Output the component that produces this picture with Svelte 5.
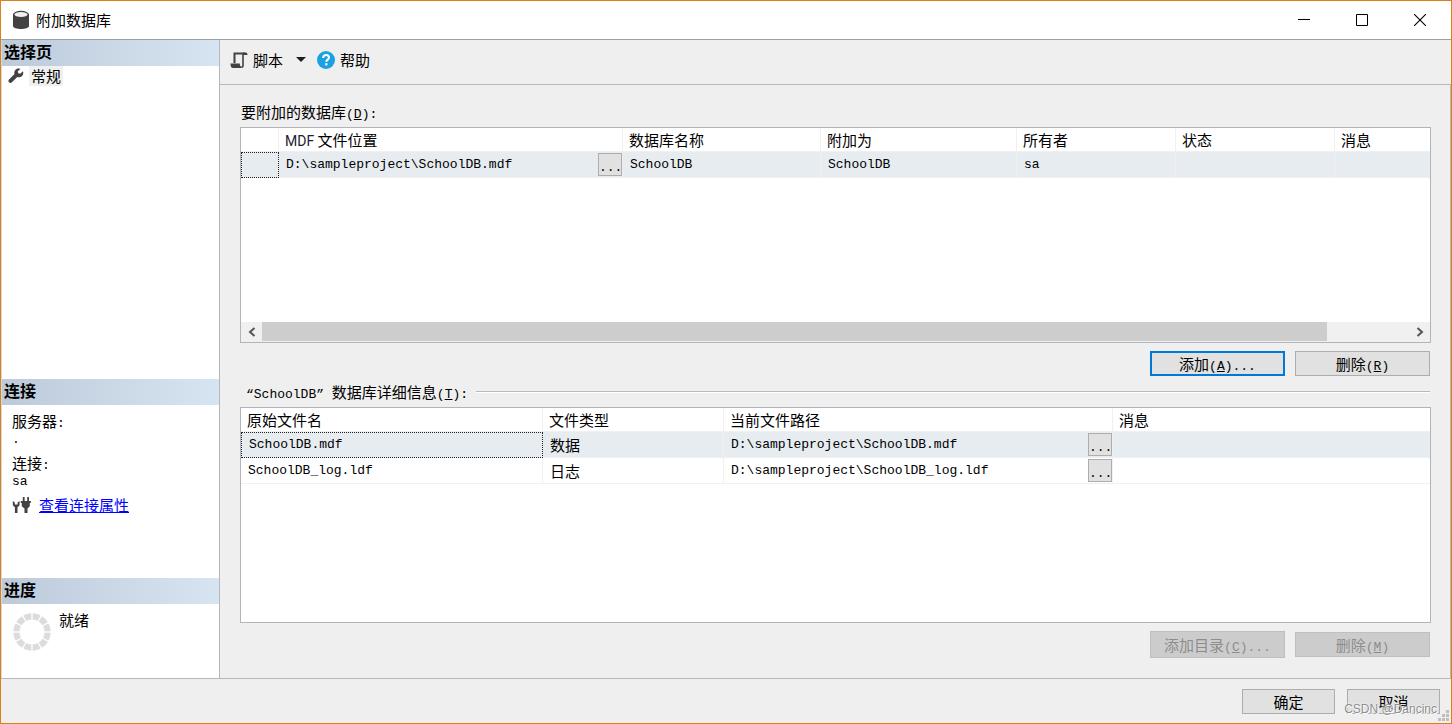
<script lang="ts">
    type Database = { mdf: string; name: string; attachAs: string; owner: string; status: string; message: string };
    type DetailFile = { name: string; type: string; path: string; message: string };

    let databases: Database[] = $state([
        { mdf: 'D:\\sampleproject\\SchoolDB.mdf', name: 'SchoolDB', attachAs: 'SchoolDB', owner: 'sa', status: '', message: '' }
    ]);

    let files: DetailFile[] = $state([
        { name: 'SchoolDB.mdf', type: '数据', path: 'D:\\sampleproject\\SchoolDB.mdf', message: '' },
        { name: 'SchoolDB_log.ldf', type: '日志', path: 'D:\\sampleproject\\SchoolDB_log.ldf', message: '' }
    ]);

    let selectedFile = $state(0);

    // Spinner segments, one every 30 degrees
    const segments = Array.from({ length: 12 }, (_, i) => i * 30);
</script>

{#snippet browse(label: string)}
    <button class="browse" aria-label={label}><span class="lat">...</span></button>
{/snippet}

<div class="window">
    <header class="titlebar">
        <svg class="db-icon" width="18" height="20" viewBox="0 0 18 20" aria-hidden="true">
            <path d="M1 4v12c0 4 16 4 16 0V4z" fill="#424242" />
            <ellipse cx="9" cy="4.5" rx="8" ry="3.7" fill="#424242" />
            <ellipse cx="9" cy="4.6" rx="6.5" ry="2.5" fill="#f0eff1" />
        </svg>
        <h1>附加数据库</h1>
        <button class="caption" aria-label="最小化">
            <svg width="12" height="12"><path d="M0 5.5h12" stroke="#000" /></svg>
        </button>
        <button class="caption" aria-label="最大化">
            <svg width="12" height="12"><path d="M.5.5h11v11H.5z" stroke="#000" fill="none" /></svg>
        </button>
        <button class="caption" aria-label="关闭">
            <svg width="12" height="12"><path d="M0 0l12 12M12 0L0 12" stroke="#000" stroke-width="1.1" /></svg>
        </button>
    </header>

    <div class="body">
        <aside>
            <section class="pages">
                <h2>选择页</h2>
                <a class="page" href="#general">
                    <svg width="16" height="16" viewBox="0 0 16 16" aria-hidden="true">
                        <path d="M15 3.2l-2.8 2.5-2-.4-.4-2L12.400 1C10.500.2 8.300.6 7.100 2.200 6.200 3.400 6.100 4.800 6.500 6.100L1 11.400c-.8.9-.8 2.100 0 2.900.8.8 2 .8 2.900 0L9.300 9c1.700.6 3.600.2 4.800-1.100 1.200-1.300 1.500-3.200.9-4.700z" fill="#424242" />
                    </svg>
                    <span>常规</span>
                </a>
            </section>

            <section class="connection">
                <h2>连接</h2>
                <dl>
                    <dt>服务器<span class="lat">:</span></dt>
                    <dd><span class="lat">.</span></dd>
                    <dt>连接<span class="lat">:</span></dt>
                    <dd><span class="lat">sa</span></dd>
                </dl>
                <div class="props">
                    <svg width="19" height="18" viewBox="0 0 19 18" aria-hidden="true">
                        <path d="M.8 5v3.200c0 1.500.8 2.300 2.100 2.800V17h2.600v-6c1.300-.5 2.100-1.300 2.100-2.800V5L5.600 6.500v2H2.800v-2z" fill="#424242" />
                        <path d="M10.800 1h1.800v4h-1.800zM15.200 1H17v4h-1.800zM8.800 5h10v2h-1v3.200L15.500 12.500V17h-3v-4.500L9.800 10.200V7h-1z" fill="#424242" />
                    </svg>
                    <a href="#connection">查看连接属性</a>
                </div>
            </section>

            <section class="progress">
                <h2>进度</h2>
                <div class="state">
                    <svg width="40" height="40" viewBox="-20 -20 40 40" aria-hidden="true">
                        {#each segments as angle}
                            <path d="M-4.200-18.200A18.700 18.700 0 0 1 4.200-18.200L2.700-12.200A12.500 12.500 0 0 0-2.700-12.200z" fill="#dcdcdc" transform="rotate({angle + 15})" />
                        {/each}
                    </svg>
                    <span>就绪</span>
                </div>
            </section>
        </aside>

        <main>
            <div class="toolbar">
                <button class="tool script">
                    <svg width="18" height="18" viewBox="0 0 18 18" aria-hidden="true">
                        <path d="M4.500 12V2.500H15" fill="none" stroke="#424242" stroke-width="2" />
                        <path d="M13 2v12.500c0 1.300-.8 1.700-1.700 1.700" fill="none" stroke="#424242" stroke-width="1.600" />
                        <path d="M13 1.500h2.500c1.300 0 2 .8 2 2.500H13z" fill="#424242" />
                        <path d="M.5 12.500h9.300c0 1.700.4 2.700 1.700 3.500v1H3C1.300 17 .5 15.500.5 12.500z" fill="#424242" />
                    </svg>
                    <span>脚本</span>
                    <svg class="arrow" width="10" height="6" aria-hidden="true"><path d="M0 0h10L5 5z" fill="#1e1e1e" /></svg>
                </button>
                <button class="tool">
                    <svg width="18" height="18" viewBox="0 0 18 18" aria-hidden="true">
                        <circle cx="9" cy="9" r="9" fill="#1ba1e2" />
                        <path d="M6.200 7c0-1.900 1.200-2.900 2.900-2.900s2.900 1 2.900 2.500c0 2-2.700 2.100-2.700 4.200" fill="none" stroke="#fff" stroke-width="2" />
                        <path d="M8.200 12.200h2.200v2.200H8.200z" fill="#fff" />
                    </svg>
                    <span>帮助</span>
                </button>
            </div>

            <div class="content">
                <h3 id="db-label">要附加的数据库<span class="lat">(<u>D</u>):</span></h3>
                <div class="grid">
                    <table class="databases" aria-labelledby="db-label">
                        <colgroup>
                            <col class="c-select" /><col class="c-mdf" /><col class="c-name" /><col class="c-as" />
                            <col class="c-owner" /><col class="c-owner" /><col />
                        </colgroup>
                        <thead>
                            <tr>
                                <th></th>
                                <th><span class="mdf">MDF</span> 文件位置</th>
                                <th>数据库名称</th>
                                <th>附加为</th>
                                <th>所有者</th>
                                <th>状态</th>
                                <th>消息</th>
                            </tr>
                        </thead>
                        <tbody>
                            {#each databases as db}
                                <tr class="selected">
                                    <td class="focus"></td>
                                    <td>
                                        <div class="path"><span class="lat">{db.mdf}</span>{@render browse('浏览 MDF 文件')}</div>
                                    </td>
                                    <td class="lat">{db.name}</td>
                                    <td class="lat">{db.attachAs}</td>
                                    <td class="lat">{db.owner}</td>
                                    <td>{db.status}</td>
                                    <td>{db.message}</td>
                                </tr>
                            {/each}
                        </tbody>
                    </table>
                    <div class="scrollbar">
                        <button aria-label="向左滚动">
                            <svg width="8" height="10"><path d="M6.500 1L2 5l4.500 4" fill="none" stroke="#555" stroke-width="2" /></svg>
                        </button>
                        <div class="track"><div class="thumb"></div><div class="rest"></div></div>
                        <button aria-label="向右滚动">
                            <svg width="8" height="10"><path d="M1.500 1L6 5 1.500 9" fill="none" stroke="#555" stroke-width="2" /></svg>
                        </button>
                    </div>
                </div>
                <div class="actions">
                    <button class="btn default">添加<span class="lat">(<u>A</u>)...</span></button>
                    <button class="btn">删除<span class="lat">(<u>R</u>)</span></button>
                </div>

                <h3 class="rule" id="detail-label">
                    <span><span class="lat">{'“SchoolDB” '}</span>数据库详细信息<span class="lat">(<u>T</u>):</span></span>
                </h3>
                <div class="grid">
                    <table class="details" aria-labelledby="detail-label">
                        <colgroup>
                            <col class="c-file" /><col class="c-type" /><col class="c-path" /><col />
                        </colgroup>
                        <thead>
                            <tr>
                                <th>原始文件名</th>
                                <th>文件类型</th>
                                <th>当前文件路径</th>
                                <th>消息</th>
                            </tr>
                        </thead>
                        <tbody>
                            {#each files as file, i}
                                <tr class:selected={i === selectedFile} onclick={() => (selectedFile = i)}>
                                    <td class="lat" class:focus={i === selectedFile}>{file.name}</td>
                                    <td>{file.type}</td>
                                    <td>
                                        <div class="path"><span class="lat">{file.path}</span>{@render browse('浏览文件路径')}</div>
                                    </td>
                                    <td>{file.message}</td>
                                </tr>
                            {/each}
                        </tbody>
                    </table>
                </div>
                <div class="actions">
                    <button class="btn tall" disabled>添加目录<span class="lat">(<u>C</u>)...</span></button>
                    <button class="btn" disabled>删除<span class="lat">(<u>M</u>)</span></button>
                </div>
            </div>
        </main>
    </div>

    <footer>
        <button class="btn small">确定</button>
        <button class="btn small">取消</button>
        <svg class="grip" width="12" height="12" aria-hidden="true">
            <path d="M8 0h3v3H8zM4 4h3v3H4zM8 4h3v3H8zM0 8h3v3H0zM4 8h3v3H4zM8 8h3v3H8z" fill="#bfbfbf" />
        </svg>
        <span class="watermark">CSDN @Dancinc</span>
    </footer>
</div>

<style>
    :global(body) {
        margin: 0;
    }

    .window {
        box-sizing: border-box;
        display: flex;
        flex-direction: column;
        min-height: 100vh;
        border: 1px solid #d9821b;
        background: #efefef;
        color: #000;
        font-family: "Noto Sans CJK SC", sans-serif;
        font-size: 15px;
        line-height: 20px;
    }

    button {
        padding: 0;
        border: 0;
        background: none;
        color: inherit;
        font: inherit;
    }

    h1, h2, h3 {
        margin: 0;
        font-size: 15px;
        font-weight: 400;
    }

    .lat {
        font-family: "Liberation Mono", "Noto Sans CJK SC", monospace;
        font-size: 13px;
        white-space: pre;
    }

    /* Keeps the smaller Latin runs from growing the line they sit in */
    span.lat {
        line-height: 1;
    }

    /* Title bar */
    .titlebar {
        display: flex;
        align-items: center;
        height: 38px;
        padding: 0 2px 0 11px;
        border-bottom: 1px solid #9a9fa5;
        background: #fff;
    }

    .titlebar h1 {
        flex: 1;
        margin-left: 6px;
    }

    .caption {
        display: flex;
        align-items: center;
        justify-content: center;
        width: 58px;
        height: 38px;
    }

    .body {
        display: flex;
        flex: 1;
    }

    /* Sidebar */
    aside {
        display: flex;
        flex: none;
        flex-direction: column;
        width: 217px;
        border-left: 1px solid #d5d8de;
        border-right: 1px solid #b4b6c0;
        background: #fff;
    }

    h2 {
        height: 26px;
        padding-left: 2px;
        background: linear-gradient(90deg, #bccad9, #d7e5f3);
        font-size: 16px;
        font-weight: 700;
        line-height: 22px;
    }

    .pages {
        flex: 1;
    }

    .connection {
        min-height: 199px;
    }

    .progress {
        min-height: 100px;
    }

    .page {
        display: flex;
        gap: 5px;
        padding-left: 6px;
        color: inherit;
        text-decoration: none;
    }

    .page svg {
        margin-top: 2px;
    }

    .page span {
        padding: 0 2px;
        background: #f0f0f0;
    }

    dl {
        margin: 0;
        padding: 6px 10px 0;
    }

    dd {
        height: 22px;
        margin: 0;
        line-height: 12px;
    }

    .props {
        display: flex;
        align-items: center;
        gap: 8px;
        padding-left: 10px;
    }

    .props a {
        color: #00f;
    }

    .state {
        display: flex;
        gap: 7px;
        padding: 8px 10px;
    }

    .state span {
        margin-top: -2px;
    }

    /* Toolbar */
    main {
        display: flex;
        flex: 1;
        flex-direction: column;
        min-width: 0;
    }

    .toolbar {
        display: flex;
        align-items: center;
        gap: 11px;
        height: 40px;
        padding: 0 10px 4px;
        border-bottom: 1px solid #b4b6c0;
    }

    .tool {
        display: flex;
        align-items: center;
        gap: 5px;
    }

    .arrow {
        margin-left: 8px;
    }

    /* Content */
    .content {
        display: flex;
        flex: 1;
        flex-direction: column;
        padding: 15px 19px 20px 20px;
        border-right: 1px solid #b4b6c0;
    }

    h3 {
        padding: 0 1px 3px;
        line-height: 24px;
    }

    .rule {
        display: flex;
        align-items: center;
        gap: 8px;
        margin-top: 4px;
        padding-left: 6px;
    }

    .rule::after {
        content: "";
        flex: 1;
        height: 1px;
        border-bottom: 1px solid #fff;
        background: #b9b9b9;
    }

    .grid {
        display: flex;
        flex: 1;
        flex-direction: column;
        justify-content: space-between;
        border: 1px solid #b1b3bd;
        background: #fff;
    }

    table {
        width: 100%;
        border-collapse: separate;
        border-spacing: 0;
        table-layout: fixed;
    }

    .c-select { width: 38px; }
    .c-mdf { width: 344px; }
    .c-name { width: 198px; }
    .c-as { width: 196px; }
    .c-owner { width: 159px; }
    .c-file { width: 302px; }
    .c-type { width: 181px; }
    .c-path { width: 389px; }

    th, td {
        box-sizing: border-box;
        padding: 0 0 0 7px;
        border-right: 1px solid #f0f0f0;
        border-bottom: 1px solid #f0f0f0;
        text-align: left;
        font-weight: 400;
        white-space: nowrap;
    }

    th {
        height: 24px;
        padding-left: 6px;
    }

    td {
        height: 26px;
    }

    th:last-child, td:last-child {
        border-right: 0;
    }

    .mdf {
        font-family: Roboto, sans-serif;
        font-size: 14px;
        line-height: 1;
        color: #223;
    }

    .selected {
        background: #e7ecf0;
    }

    .focus {
        border: 1px dotted #222;
    }

    .path {
        display: flex;
        align-items: center;
        justify-content: space-between;
    }

    .browse {
        box-sizing: border-box;
        width: 24px;
        height: 23px;
        border: 1px solid #adadad;
        background: #e1e1e1;
    }

    .scrollbar {
        display: flex;
        height: 20px;
        background: #f0f0f0;
    }

    .scrollbar button {
        display: flex;
        align-items: center;
        justify-content: center;
        width: 21px;
    }

    .track {
        display: flex;
        flex: 1;
    }

    .thumb {
        flex: 13;
        height: 19px;
        background: #cdcdcd;
    }

    .rest {
        flex: 1;
    }

    .actions {
        display: flex;
        align-items: center;
        justify-content: flex-end;
        gap: 10px;
        padding: 8px 1px 0 0;
    }

    .btn {
        box-sizing: border-box;
        width: 135px;
        height: 25px;
        border: 1px solid #adadad;
        background: #e1e1e1;
        line-height: 22px;
    }

    .default {
        border: 2px solid #0078d7;
        line-height: 20px;
    }

    .tall {
        height: 27px;
    }

    .btn:disabled {
        border-color: #bfbfbf;
        background: #ccc;
        color: #8c8c8c;
    }

    .small {
        width: 93px;
    }

    footer {
        position: relative;
        display: flex;
        justify-content: flex-end;
        gap: 12px;
        padding: 10px 11px 9px;
        border-top: 1px solid #b4b6c0;
    }

    .grip {
        position: absolute;
        right: 1px;
        bottom: 1px;
    }

    .watermark {
        position: absolute;
        right: 14px;
        bottom: 4px;
        color: #8d8d8d;
        font-family: "Liberation Sans", Arial, sans-serif;
        font-size: 12px;
        text-shadow: 0 0 2px #fff, 1px 1px 0 #fff;
        pointer-events: none;
    }
</style>
